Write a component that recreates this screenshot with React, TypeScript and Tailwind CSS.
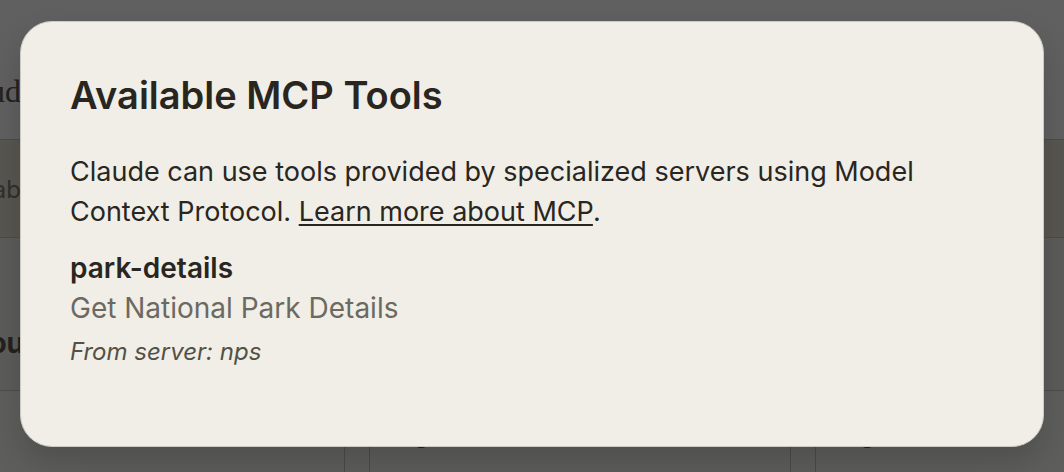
const tools = [
  {
    name: "park-details",
    description: "Get National Park Details",
    server: "nps",
  },
];

function Backdrop() {
  return (
    <div
      aria-hidden="true"
      className="col-start-1 row-start-1 flex min-w-0 flex-col overflow-hidden bg-[#5e5e5c] text-[#22211d]"
    >
      <div className="flex h-[140px] flex-col justify-end border-b border-[#4b4b49] bg-[#606060] pb-6">
        <div className="flex w-[21px] justify-end font-['Liberation_Serif',serif] text-[32px]">ud</div>
      </div>
      <div className="flex h-[98px] items-center border-b border-[#4b4b48] bg-[#575650] pt-0.5">
        <div className="flex w-[21px] justify-end text-2xl text-[#302f2b]">ab</div>
      </div>
      <div className="flex h-[153px] flex-col justify-end border-b border-[#4d4d4a] bg-[#5c5c5a] pb-[26px]">
        <div className="flex w-6 justify-end text-[28px] font-bold">ou</div>
      </div>
      <div className="grid flex-1 grid-cols-[345px_422px_1fr] gap-6">
        <div className="border-r border-[#4b4b48]" />
        <div className="border-x border-[#4b4b48] pt-7 pl-11 text-2xl">g</div>
        <div className="border-l border-[#4b4b48] pt-7 pl-11 text-2xl">g</div>
      </div>
    </div>
  );
}

export default function App() {
  return (
    <div className="grid min-h-screen font-['Inter','Liberation_Sans',sans-serif]">
      <Backdrop />
      <div className="relative col-start-1 row-start-1 px-5 pt-[21px] pb-[25px]">
        <section
          role="dialog"
          aria-modal="true"
          aria-labelledby="dialog-title"
          className="rounded-[32px] border border-[#cbc9c2] bg-[#f0eee6] px-[49px] pt-[51px] pb-[74px] text-[#29261f] shadow-[0_16px_32px_rgba(0,0,0,0.16)]"
        >
          <h1 id="dialog-title" className="text-[38px] leading-[44px] font-semibold">
            Available MCP Tools
          </h1>
          <p className="mt-[35px] text-[27px] leading-10">
            Claude can use tools provided by specialized servers using Model Context Protocol.{" "}
            <a href="#mcp" className="underline decoration-2 underline-offset-3">
              Learn more about MCP
            </a>
            .
          </p>
          <ul className="mt-4">
            {tools.map((tool) => (
              <li key={tool.name}>
                <h2 className="text-[28px] leading-10 font-semibold">{tool.name}</h2>
                <p className="text-[28px] leading-10 text-[#6b6961]">{tool.description}</p>
                <p className="mt-1 text-2xl leading-10 text-[#535146] italic">
                  From server: {tool.server}
                </p>
              </li>
            ))}
          </ul>
        </section>
      </div>
    </div>
  );
}
